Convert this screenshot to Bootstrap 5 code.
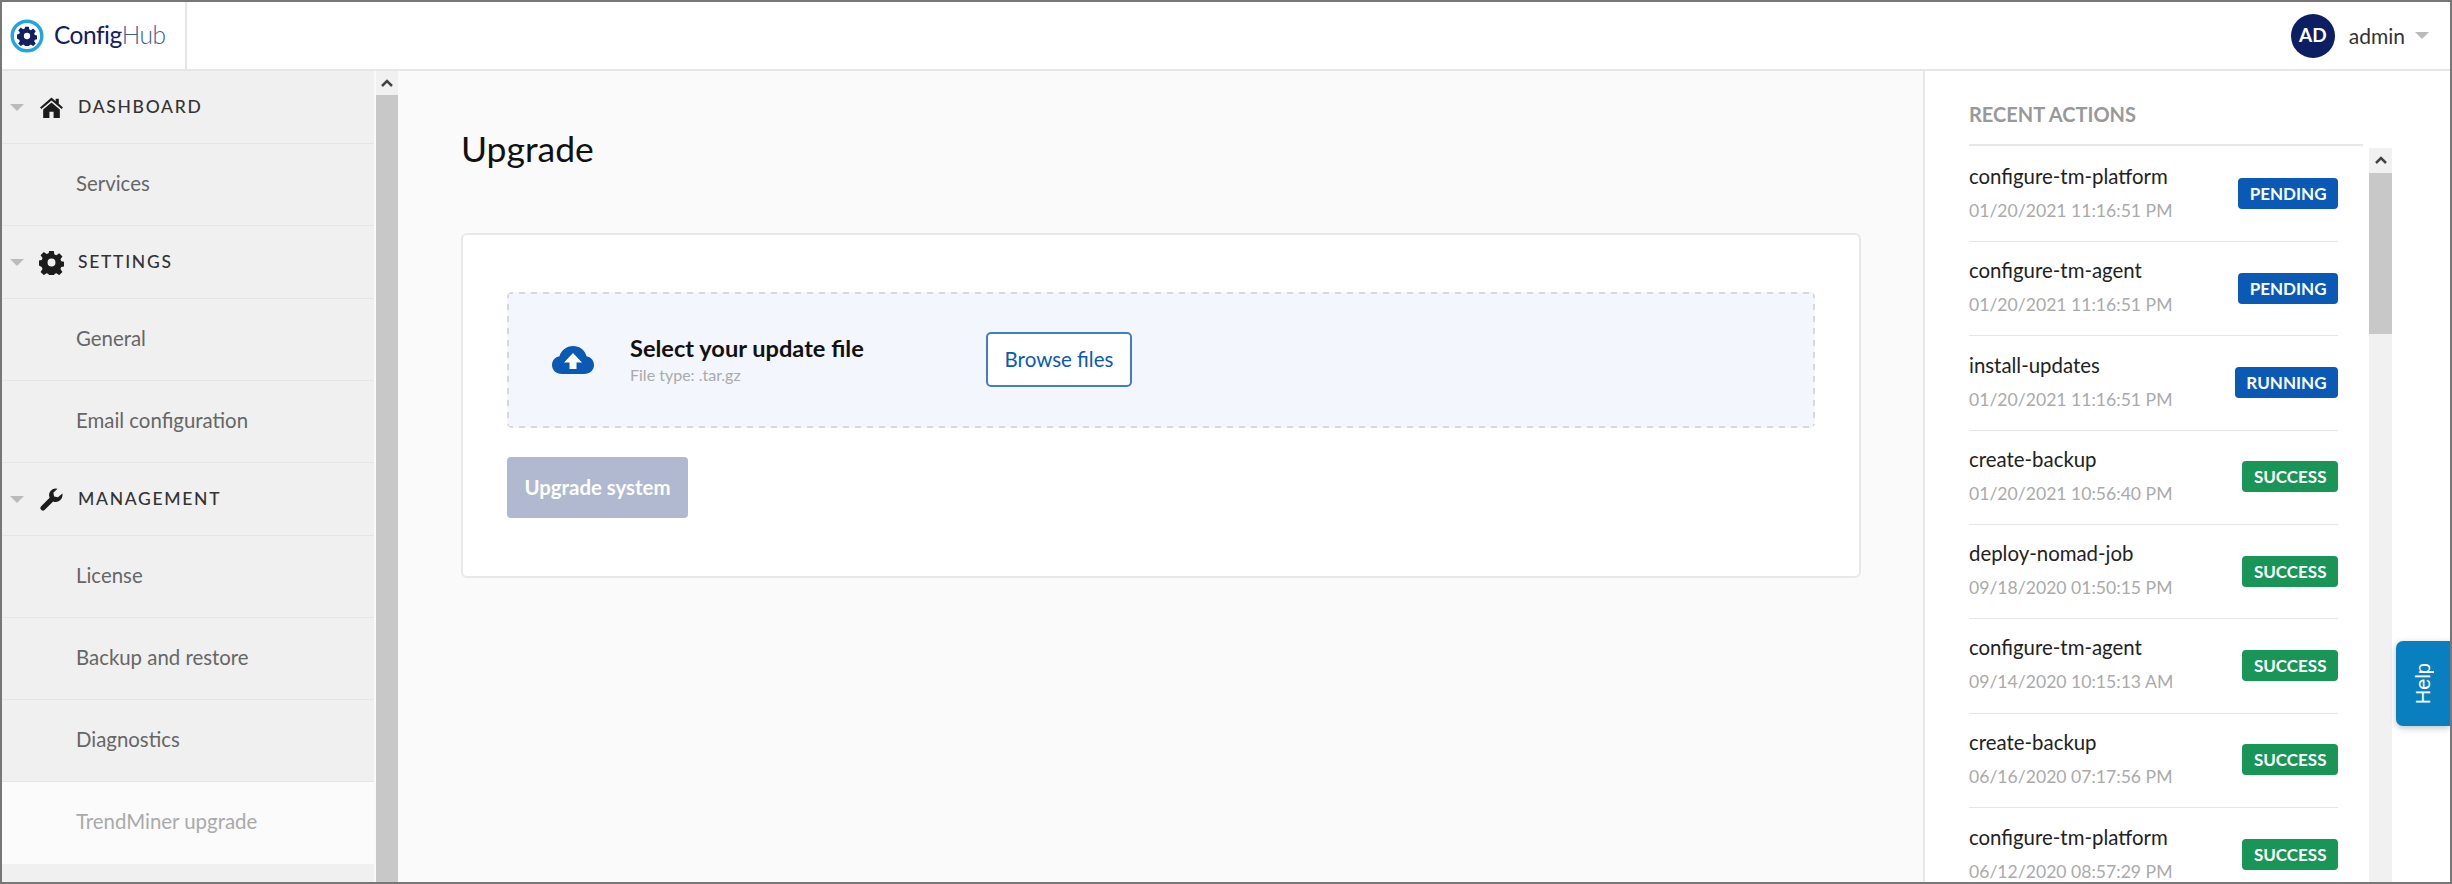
<!DOCTYPE html>
<html>
<head>
  <title>ConfigHub - Upgrade</title>
  <link href="https://cdn.jsdelivr.net/npm/bootstrap@5.3.0/dist/css/bootstrap.min.css" rel="stylesheet">
  <style>
    html, body { height: 100%; overflow: hidden; }
    body { font-family: "Lato", "Liberation Sans", sans-serif; background: #fafafa; color: #222; }
    .app-frame { height: 884px; border: 2px solid #777; border-bottom-width: 2px; position: relative; overflow: hidden; }
    .top-bar { height: 69px; padding: 0; background: #fff; border-bottom: 2px solid #e6e6e6; flex-wrap: nowrap; }
    .logo-box { width: 185px; height: 67px; border-right: 2px solid #e6e6e6; padding-left: 8px; gap: 10px; }
    .logo-text { font-size: 24.5px; letter-spacing: -0.5px; color: #14205f; }
    .logo-text span { color: #3d5f92; font-weight: 300; }
    .avatar { width: 44px; height: 44px; background: #0c1f63; color: #fff; font-size: 19px; font-weight: 700; }
    .user-name { font-size: 21px; color: #333; margin-left: 14px; }
    .caret-down { width: 0; height: 0; border-left: 7px solid transparent; border-right: 7px solid transparent; border-top: 7px solid #bbb; }
    .user-box { margin-right: 21px; }
    .user-box .caret-down { margin-left: 10px; }
    .side-col { width: 396px; flex: 0 0 396px; }
    .side-list { width: 372px; background: #f0f0f0; }
    .side-head { height: 73px; padding: 0 0 0 8px; background: #f0f0f0; border-color: #e5e5e5; border-width: 0 0 2px; color: #333; font-size: 17.5px; font-weight: 500; letter-spacing: 1.7px; gap: 15px; }
    .side-head svg { width: 25px; height: 25px; margin-right: -1px; fill: #1c1c1c; }
    .side-item { height: 82px; padding: 0 0 3px 74px; background: #f0f0f0; border-color: #e5e5e5; border-width: 0 0 2px; color: #666; font-size: 20.4px; }
    .side-item.current { background: #fbfbfb; color: #aaa; }
    .bar-track { width: 22px; background: #f1f1f1; }
    .bar-arrow { height: 24px; }
    .bar-arrow svg { width: 14px; height: 10px; }
    .bar-thumb-side { flex: 1; background: #c8c8c8; }
    .main-col { padding: 57px 62px 0 63px; min-width: 0; }
    .page-title { font-size: 35.5px; font-weight: 400; color: #111; margin-bottom: 62px; }
    .upgrade-card { border: 2px solid #e8e8e8; border-radius: 6px; padding: 57px 44px 58px; }
    .drop-zone { height: 136px; border-radius: 5px; padding-left: 45px; margin-bottom: 29px;
      background:
        linear-gradient(90deg, #d8d8d8 6px, transparent 6px) top left / 12px 2px repeat-x,
        linear-gradient(90deg, #d8d8d8 6px, transparent 6px) bottom left / 12px 2px repeat-x,
        linear-gradient(180deg, #d8d8d8 6px, transparent 6px) top left / 2px 12px repeat-y,
        linear-gradient(180deg, #d8d8d8 6px, transparent 6px) top right / 2px 12px repeat-y,
        #f3f6fc; }
    .drop-zone svg { width: 42px; height: 28px; flex: none; }
    .drop-text { width: 392px; padding-left: 36px; flex: none; }
    .drop-title { font-size: 23.6px; font-weight: 700; color: #111; line-height: 28px; }
    .drop-sub { font-size: 16px; color: #aaa; line-height: 20px; margin-top: 3px; }
    .browse-btn { width: 146px; height: 55px; font-size: 20.500px; color: #0a5ab5; background: #fff; border: 2px solid #3f7fc4; border-radius: 5px; padding: 0; }
    .upgrade-btn { width: 181px; height: 61px; font-size: 20.4px; font-weight: 700; color: #fff; background: #b0b9d0; border: 0; border-radius: 4px; padding: 0; opacity: 1; }
    .btn.upgrade-btn:disabled { background: #b0b9d0; color: #fff; opacity: 1; border: 0; }
    .actions-col { width: 527px; flex: 0 0 527px; background: #fff; border-left: 2px solid #e8e8e8; padding-left: 44px; }
    .actions-title { height: 76px; width: 394px; margin: 0; padding-top: 30px; font-size: 20px; font-weight: 700; color: #999; border-bottom: 2px solid #e8e8e8; line-height: 26px; }
    .actions-wrap { width: 423px; gap: 31px; min-height: 0; }
    .actions-list { width: 369px; flex: none; padding-top: 2px; }
    .action-row { height: 94.3px; padding: 0 0 3px; border-color: #e6e6e6; border-width: 0 0 2px; flex-wrap: nowrap; }
    .action-name { font-size: 20.4px; color: #222; line-height: 26px; }
    .action-time { font-size: 17.6px; color: #aaa; line-height: 24px; margin-top: 10px; }
    .state-tag { height: 31px; border-radius: 4px; font-size: 17px; font-weight: 700; padding: 0 11.500px; margin-top: 2px; line-height: 31px; }
    .state-blue { background: #0a5ab5; color: #fff; }
    .state-green { background: #1a9558; color: #fff; }
    .list-thumb { height: 161px; background: #c8c8c8; }
    .actions-track { width: 23px; flex: none; margin-top: 2px; }
    .actions-track .bar-arrow { height: 25px; }
    .help-tab { position: absolute; right: 0; top: 639px; width: 54px; height: 85px; background: #0a7fc0; color: #fff; font-family: "Liberation Sans", sans-serif; font-size: 20px; border-radius: 7px 0 0 7px; box-shadow: 0 2px 6px rgba(0,0,0,.25); }
    .help-tab span { writing-mode: vertical-rl; transform: rotate(180deg); }
  </style>
</head>
<body>
  <svg class="d-none">
    <symbol id="gear-icon" viewBox="0 0 24 24">
      <path d="M9.8 1h4.4l.6 3.2 1.9.8 2.7-1.9 3.1 3.1-1.9 2.7.8 1.9 3.2.6v4.4l-3.2.6-.8 1.9 1.9 2.7-3.1 3.1-2.7-1.9-1.9.8-.6 3.2H9.8l-.6-3.2-1.9-.8-2.7 1.9-3.1-3.1 1.9-2.7-.8-1.9L-.6 14.6v-4.4l3.2-.6.8-1.9-1.9-2.7 3.1-3.1 2.7 1.9 1.9-.8zM12 8.2a3.8 3.8 0 1 0 0 7.6 3.8 3.8 0 0 0 0-7.6z" fill-rule="evenodd"/>
    </symbol>
  </svg>

  <div class="app-frame d-flex flex-column">
    <!-- Top bar -->
    <nav class="navbar top-bar justify-content-between">
      <div class="logo-box d-flex align-items-center">
        <svg width="34" height="34" viewBox="0 0 34 34">
          <circle cx="17" cy="17" r="14.8" fill="#fff" stroke="#1fa6e0" stroke-width="3.4"/>
          <svg x="7" y="7" width="20" height="20" viewBox="0 0 24 24" fill="#14205f"><use href="#gear-icon"/></svg>
        </svg>
        <div class="logo-text">Config<span>Hub</span></div>
      </div>
      <div class="user-box d-flex align-items-center">
        <div class="avatar rounded-circle d-flex align-items-center justify-content-center">AD</div>
        <div class="user-name">admin</div>
        <div class="caret-down"></div>
      </div>
    </nav>

    <div class="d-flex flex-grow-1 overflow-hidden">
      <!-- Sidebar -->
      <div class="side-col d-flex">
        <div class="list-group list-group-flush rounded-0 side-list">
          <div class="list-group-item side-head d-flex align-items-center flex-shrink-0">
            <span class="caret-down"></span>
            <svg viewBox="0 0 24 24"><path d="M12 2.5 1 12l1.3 1.5L12 5.2l9.700 8.300L23 12l-4-3.500V3.500h-3v2.400zM12 7.300 4 14v8h6v-6h4v6h6v-8z"/></svg>
            <span>DASHBOARD</span>
          </div>
          <a class="list-group-item side-item d-flex align-items-center flex-shrink-0" href="#">Services</a>
          <div class="list-group-item side-head d-flex align-items-center flex-shrink-0">
            <span class="caret-down"></span>
            <svg viewBox="0 0 24 24"><use href="#gear-icon"/></svg>
            <span>SETTINGS</span>
          </div>
          <a class="list-group-item side-item d-flex align-items-center flex-shrink-0" href="#">General</a>
          <a class="list-group-item side-item d-flex align-items-center flex-shrink-0" href="#">Email configuration</a>
          <div class="list-group-item side-head d-flex align-items-center flex-shrink-0">
            <span class="caret-down"></span>
            <svg viewBox="0 0 24 24"><path d="M22.400 6.300a6.500 6.500 0 0 1-8.800 7.500L5.500 21.900a2.400 2.400 0 0 1-3.400-3.400L10.200 10.400A6.500 6.500 0 0 1 17.700 1.600L13.800 5.500l.7 3.700 3.700.7z"/></svg>
            <span>MANAGEMENT</span>
          </div>
          <a class="list-group-item side-item d-flex align-items-center flex-shrink-0" href="#">License</a>
          <a class="list-group-item side-item d-flex align-items-center flex-shrink-0" href="#">Backup and restore</a>
          <a class="list-group-item side-item d-flex align-items-center flex-shrink-0" href="#">Diagnostics</a>
          <a class="list-group-item side-item current d-flex align-items-center flex-shrink-0" href="#">TrendMiner upgrade</a>
        </div>
        <div class="bar-track d-flex flex-column ms-auto">
          <div class="bar-arrow d-flex align-items-center justify-content-center">
            <svg viewBox="0 0 14 10"><path d="M2 8l5-5 5 5" fill="none" stroke="#444" stroke-width="2.500"/></svg>
          </div>
          <div class="bar-thumb-side"></div>
        </div>
      </div>

      <!-- Main content -->
      <main class="main-col flex-grow-1">
        <h1 class="page-title">Upgrade</h1>
        <div class="card upgrade-card">
          <div class="drop-zone d-flex align-items-center">
            <svg viewBox="0 0 42 28">
              <path d="M10 28C4 28 0 24 0 19c0-4.500 3-8 7.500-8.800C9 4.500 14.500 0 21 0s12 4 13.500 10.200C39 11 42 14.500 42 19c0 5-4 9-10 9z" fill="#0a5ab5"/>
              <path d="M21 7l9 9.500h-5.500V23h-7v-6.500H12z" fill="#fff"/>
            </svg>
            <div class="drop-text">
              <div class="drop-title">Select your update file</div>
              <div class="drop-sub">File type: .tar.gz</div>
            </div>
            <button class="btn browse-btn" type="button">Browse files</button>
          </div>
          <div>
            <button class="btn upgrade-btn" type="button" disabled>Upgrade system</button>
          </div>
        </div>
      </main>

      <!-- Recent actions -->
      <aside class="actions-col d-flex flex-column">
        <h2 class="actions-title">RECENT ACTIONS</h2>
        <div class="actions-wrap d-flex flex-grow-1 overflow-hidden">
          <div class="list-group list-group-flush rounded-0 actions-list" id="actionList"></div>
          <div class="bar-track actions-track d-flex flex-column">
            <div class="bar-arrow d-flex align-items-center justify-content-center">
              <svg viewBox="0 0 14 10"><path d="M2 8l5-5 5 5" fill="none" stroke="#444" stroke-width="2.500"/></svg>
            </div>
            <div class="list-thumb"></div>
          </div>
        </div>
      </aside>
    </div>

    <div class="help-tab d-flex align-items-center justify-content-center"><span>Help</span></div>
  </div>

  <script src="https://cdn.jsdelivr.net/npm/bootstrap@5.3.0/dist/js/bootstrap.bundle.min.js"></script>
  <script>
    const actions = [
      ["configure-tm-platform", "01/20/2021 11:16:51 PM", "PENDING"],
      ["configure-tm-agent", "01/20/2021 11:16:51 PM", "PENDING"],
      ["install-updates", "01/20/2021 11:16:51 PM", "RUNNING"],
      ["create-backup", "01/20/2021 10:56:40 PM", "SUCCESS"],
      ["deploy-nomad-job", "09/18/2020 01:50:15 PM", "SUCCESS"],
      ["configure-tm-agent", "09/14/2020 10:15:13 AM", "SUCCESS"],
      ["create-backup", "06/16/2020 07:17:56 PM", "SUCCESS"],
      ["configure-tm-platform", "06/12/2020 08:57:29 PM", "SUCCESS"]
    ];
    const list = document.getElementById("actionList");
    actions.forEach(a => {
      const tone = a[2] === "SUCCESS" ? "state-green" : "state-blue";
      list.innerHTML += `
        <div class="list-group-item action-row d-flex justify-content-between align-items-center flex-shrink-0 bg-transparent">
          <div>
            <div class="action-name">${a[0]}</div>
            <div class="action-time">${a[1]}</div>
          </div>
          <span class="badge state-tag ${tone}">${a[2]}</span>
        </div>`;
    });
  </script>
</body>
</html>
